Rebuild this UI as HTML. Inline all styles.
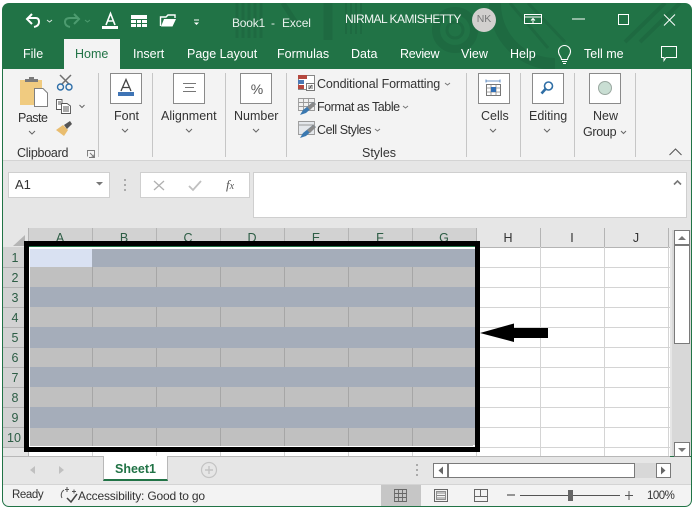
<!DOCTYPE html>
<html><head><meta charset="utf-8">
<style>
html,body{margin:0;padding:0;background:#fff}
#w{position:relative;width:695px;height:511px;overflow:hidden;background:#fff;font-family:"Liberation Sans",sans-serif;font-size:12.5px;color:#333}
#w div{position:absolute}
.t{white-space:nowrap;line-height:14px}
.g{color:#fff}
.box{background:#fff;border:1px solid #8a8a8a;box-sizing:border-box;width:32px;height:31px;top:73px}
.sep{width:1px;background:#c6c6c6;top:73px;height:84px}
.h{color:#555;font-size:12.5px;text-align:center;line-height:14px}
svg{position:absolute;overflow:visible}
</style></head><body>
<div id="w">
<!-- window frame -->
<div style="left:2px;top:3px;width:690px;height:504px;background:#217346;border-radius:7px"></div>
<svg style="left:2px;top:3px" width="690" height="66" viewBox="2 3 690 66">
<defs><clipPath id="c"><rect x="2" y="3" width="690" height="66"/></clipPath></defs>
<g stroke="#1e6a41" fill="none" clip-path="url(#c)">
<path d="M237 3V38M243 3V38M249 3V38M255 3V38M261 3V38" stroke-width="3"/>
<path d="M283 3L298 26" stroke-width="5"/>
<path d="M328 3V40" stroke-width="9"/>
<path d="M346 3V34M351 3V34M356 3V34M361 3V34" stroke-width="2"/>
<circle cx="455" cy="30" r="19" stroke-width="8"/>
<circle cx="455" cy="30" r="8" stroke-width="3"/>
<path d="M495 3A60 60 0 0 0 555 64" stroke-width="12"/>
<path d="M510 3L548 48M528 3L565 42" stroke-width="3"/>
<path d="M625 42L665 3M640 42L680 3" stroke-width="4"/>
</g></svg>
<!-- QAT -->
<svg style="left:0;top:0" width="240" height="40" viewBox="0 0 240 40">
<path d="M28 18H36Q39 18 39 22T34 27" fill="none" stroke="#fff" stroke-width="2"/>
<path d="M32 14L27 19L32 24" fill="none" stroke="#fff" stroke-width="2"/>
<path d="M47 20l2.500 2 2.500-2" fill="none" stroke="#d6e6dc"/>
<path d="M78 18H70Q65 18 65 22T70 27" fill="none" stroke="#4c9b6f" stroke-width="2"/>
<path d="M74 14L79 19L74 24" fill="none" stroke="#4c9b6f" stroke-width="2"/>
<path d="M85 20l2.500 2 2.500-2" fill="none" stroke="#4c9b6f"/>
<path d="M106 25L110.500 13.500L115 25M107.500 21H113.500" fill="none" stroke="#fff" stroke-width="1.600"/>
<rect x="102" y="26" width="16" height="3" fill="#fff"/>
<rect x="131" y="15" width="16" height="12" fill="#fff"/>
<path d="M131 19.500H147M131 23.500H147M136.500 19.500V27M141.500 19.500V27" stroke="#217346"/>
<path d="M160.500 26V17H166L168 15H175V18" fill="none" stroke="#fff" stroke-width="1.400"/>
<path d="M161 26.500L164 19H176L172.500 26.500Z" fill="#fff"/>
<path d="M194 20H199" stroke="#fff"/><path d="M194 22.500h5l-2.500 2.500z" fill="#fff"/>
</svg>
<div class="t" style="left:232px;top:16px;font-size:12px;color:#e8f1ec;letter-spacing:-.2px">Book1</div>
<div class="t" style="left:271px;top:16px;font-size:12px;color:#e8f1ec">-</div>
<div class="t" style="left:282px;top:16px;font-size:12px;color:#e8f1ec;letter-spacing:-.1px">Excel</div>
<div class="t" style="left:345px;top:12px;font-size:12px;letter-spacing:-.53px;color:#f2f7f4">NIRMAL KAMISHETTY</div>
<div style="left:472px;top:8px;width:24px;height:24px;border-radius:50%;background:#d2d0ce;color:#777;text-align:center;line-height:23px;font-size:10.500px">NK</div>
<svg style="left:520px;top:10px" width="170" height="22" viewBox="520 10 170 22">
<rect x="524.500" y="14.500" width="17" height="9" fill="none" stroke="#fff"/><path d="M524 17H542" stroke="#fff"/><path d="M533 23V18.500M531 20.500L533 18.500L535 20.500" fill="none" stroke="#fff"/>
<path d="M572 19H585" stroke="#fff"/>
<rect x="618.500" y="14.500" width="10" height="10" fill="none" stroke="#fff" stroke-width="1"/>
<path d="M664 14.500L675 25.500M675 14.500L664 25.500" stroke="#fff"/>
</svg>
<!-- Tabs -->
<div style="left:64px;top:39px;width:56px;height:30px;background:#f3f3f3"></div>
<div class="t g" style="left:23px;top:47px">File</div>
<div class="t" style="left:75px;top:47px;color:#217346">Home</div>
<div class="t g" style="left:133px;top:47px">Insert</div>
<div class="t g" style="left:187px;top:47px">Page Layout</div>
<div class="t g" style="left:277px;top:47px">Formulas</div>
<div class="t g" style="left:351px;top:47px">Data</div>
<div class="t g" style="left:400px;top:47px;letter-spacing:-.3px">Review</div>
<div class="t g" style="left:461px;top:47px">View</div>
<div class="t g" style="left:510px;top:47px">Help</div>
<div class="t g" style="left:584px;top:47px">Tell me</div>
<svg style="left:555px;top:43px" width="20" height="24" viewBox="555 43 20 24">
<path d="M561.500 59.500C561.500 56.500 558.500 55.500 558.500 51.500A6 6 0 0 1 570.500 51.500C570.500 55.500 567.500 56.500 567.500 59.500ZM562 61.500H567M563 63.500H566" fill="none" stroke="#fff" stroke-width="1.100"/>
</svg>
<svg style="left:660px;top:44px" width="22" height="20" viewBox="660 44 22 20">
<path d="M661.500 46.500H676.500V57.500H666L664 60.500V57.500H661.500Z" fill="none" stroke="#fff"/>
</svg>
<!-- Ribbon -->
<div style="left:3px;top:69px;width:688px;height:92px;background:#f3f3f3;border-bottom:1px solid #d4d4d4;box-sizing:border-box"></div>
<svg style="left:15px;top:73px" width="70" height="70" viewBox="15 73 70 70">
<path d="M20 80H42V88H34V105H20Z" fill="#f0cb80"/>
<path d="M25 82V79H29V77H34V79H38V82Z" fill="#7a7a7a"/>
<path d="M34.500 88.500H43L47.500 93V106.500H34.500Z" fill="#fff" stroke="#808080"/>
<path d="M60 75L69 84M71 75L62 84" stroke="#6f6f6f" stroke-width="1.500"/>
<circle cx="60.500" cy="87" r="3" fill="none" stroke="#2d6ea8" stroke-width="1.400"/><circle cx="69" cy="87" r="3" fill="none" stroke="#2d6ea8" stroke-width="1.400"/>
<path d="M56.500 99.500H62V109.500H56.500ZM58 102H61M58 104H61" fill="#fff" stroke="#555" stroke-width=".9"/>
<path d="M61.500 103.500H67L70.500 106V113.500H61.500ZM63 107H69M63 109H69M63 111H69" fill="#fff" stroke="#555" stroke-width=".9"/>
<path d="M79.500 105l2.500 2.500 2.500-2.500" fill="none" stroke="#666"/>
<path d="M56 130L63 125L68 130L64 136Z" fill="#e9bd6f"/>
<path d="M64 125L70 121L72 124L67 129Z" fill="#555"/>
</svg>
<div class="t" style="left:18px;top:111px;letter-spacing:-.5px">Paste</div>
<svg style="left:28px;top:130px" width="10" height="6"><path d="M1 1l3 3 3-3" fill="none" stroke="#666"/></svg>
<div class="t" style="left:17px;top:146px;letter-spacing:-.25px">Clipboard</div>
<svg style="left:86px;top:149px" width="10" height="10"><path d="M1.500 7.500V1.500H8.500V8.500H3M4 4L8 8M8 5.500V8H5.500" fill="none" stroke="#777" stroke-width=".9"/></svg>
<div class="sep" style="left:98px"></div>
<div class="box" style="left:110px"></div>
<svg style="left:110px;top:73px" width="32" height="31"><path d="M11 18L16 6.500L21 18M12.500 14.500H19.500" fill="none" stroke="#444" stroke-width="1.300"/><rect x="8" y="19" width="16" height="4" fill="#3f74b5"/></svg>
<div class="t" style="left:114px;top:109px">Font</div>
<svg style="left:121px;top:128px" width="10" height="6"><path d="M1 1l3 3 3-3" fill="none" stroke="#666"/></svg>
<div class="sep" style="left:152px"></div>
<div class="box" style="left:173px"></div>
<svg style="left:173px;top:73px" width="32" height="31"><path d="M10 10.500H23M12 14.500H21M10 18.500H23" stroke="#777"/></svg>
<div class="t" style="left:161px;top:109px">Alignment</div>
<svg style="left:185px;top:128px" width="10" height="6"><path d="M1 1l3 3 3-3" fill="none" stroke="#666"/></svg>
<div class="sep" style="left:225px"></div>
<div class="box" style="left:240px"></div>
<div class="t" style="left:241px;top:82px;width:32px;text-align:center;font-size:14px;color:#555">%</div>
<div class="t" style="left:234px;top:109px">Number</div>
<svg style="left:252px;top:128px" width="10" height="6"><path d="M1 1l3 3 3-3" fill="none" stroke="#666"/></svg>
<div class="sep" style="left:286px"></div>
<svg style="left:295px;top:72px" width="24" height="68" viewBox="295 72 24 68">
<rect x="298.500" y="75.500" width="16" height="14" fill="#fff" stroke="#888"/>
<rect x="298" y="75" width="9" height="4" fill="#b5483f"/><rect x="298" y="80" width="6" height="4" fill="#4a79b5"/><rect x="298" y="85" width="6" height="4" fill="#b5483f"/>
<rect x="306.500" y="83.500" width="8" height="7" fill="#fff" stroke="#777"/><path d="M308 86H313M308 88H313M312 85L309 89" stroke="#444" stroke-width=".7"/>
<path d="M298.500 98.500H314.500V110.500H298.500ZM298.500 102.500H314.500M298.500 106.500H314.500M303.500 98.500V110.500M308.500 98.500V110.500" fill="#f0f0f0" stroke="#999" stroke-width=".9"/>
<path d="M313 102L316 104L306 113L300 115L303 110Z" fill="#3a78b0"/><path d="M313 102L316 104L310 110L307 107Z" fill="#8a8a8a"/>
<path d="M298.500 121.500H314.500V134.500H298.500Z" fill="#e4e7eb" stroke="#999" stroke-width=".9"/>
<path d="M299 125H314" stroke="#999"/>
<path d="M313 125L316 127L306 136L300 138L303 133Z" fill="#3a78b0"/><path d="M313 125L316 127L310 133L307 130Z" fill="#8a8a8a"/>
</svg>
<div class="t" style="left:317px;top:77px;letter-spacing:-.12px">Conditional Formatting</div>
<div class="t" style="left:317px;top:100px;letter-spacing:-.45px">Format as Table</div>
<div class="t" style="left:317px;top:123px;letter-spacing:-.45px">Cell Styles</div>
<svg style="left:440px;top:76px" width="14" height="64" viewBox="440 76 14 64"><path d="M445 83l2.500 2 2.500-2" fill="none" stroke="#777"/></svg>
<svg style="left:402px;top:103px" width="14" height="10"><path d="M1 3l2.500 2 2.500-2" fill="none" stroke="#777"/></svg>
<svg style="left:375px;top:126px" width="14" height="10"><path d="M0 3l2.500 2 2.500-2" fill="none" stroke="#777"/></svg>
<div class="t" style="left:362px;top:146px">Styles</div>
<div class="sep" style="left:466px"></div>
<div class="box" style="left:478px"></div>
<svg style="left:478px;top:73px" width="32" height="31">
<path d="M8 8H22M8 6.500V9.500M22 6.500V9.500" stroke="#3f74b5" stroke-width=".8"/>
<rect x="8.500" y="11.500" width="14" height="11" fill="#fff" stroke="#777"/>
<path d="M8.500 15H22.500M8.500 19H22.500M13 11.500V22.500M18 11.500V22.500" stroke="#888" stroke-width=".8"/>
<rect x="13" y="14" width="5" height="5" fill="#2f6eb5"/>
</svg>
<div class="t" style="left:481px;top:109px">Cells</div>
<svg style="left:489px;top:128px" width="10" height="6"><path d="M1 1l3 3 3-3" fill="none" stroke="#666"/></svg>
<div class="sep" style="left:520px"></div>
<div class="box" style="left:532px"></div>
<svg style="left:532px;top:73px" width="32" height="31"><circle cx="16.500" cy="13" r="4" fill="#fff" stroke="#2f6ea5" stroke-width="1.600"/><path d="M13.500 16L9.500 20.500" stroke="#2f6ea5" stroke-width="2.600"/></svg>
<div class="t" style="left:529px;top:109px">Editing</div>
<svg style="left:543px;top:128px" width="10" height="6"><path d="M1 1l3 3 3-3" fill="none" stroke="#666"/></svg>
<div class="sep" style="left:574px"></div>
<div class="box" style="left:589px"></div>
<svg style="left:589px;top:73px" width="32" height="31"><circle cx="16" cy="15" r="6.500" fill="#c9ded3" stroke="#9aa8a0"/></svg>
<div class="t" style="left:593px;top:109px">New</div>
<div class="t" style="left:583px;top:125px;letter-spacing:-.3px">Group</div>
<svg style="left:620px;top:130px" width="10" height="6"><path d="M1 1l2.500 2.500 2.500-2.500" fill="none" stroke="#666"/></svg>
<div class="sep" style="left:635px"></div>
<svg style="left:668px;top:147px" width="16" height="10"><path d="M1.500 8L7.500 2L13.500 8" fill="none" stroke="#555"/></svg>
<!-- Formula bar -->
<div style="left:3px;top:161px;width:688px;height:67px;background:#e6e6e6"></div>
<div style="left:8px;top:172px;width:102px;height:26px;background:#fff;border:1px solid #cfcfcf;box-sizing:border-box"></div>
<div class="t" style="left:15px;top:178px;font-size:13px">A1</div>
<svg style="left:95px;top:181px" width="10" height="6"><path d="M1 1H8L4.500 4.500Z" fill="#777"/></svg>
<svg style="left:122px;top:178px" width="6" height="16"><path d="M3 1V3M3 6V8M3 11V13" stroke="#aaa" stroke-width="2"/></svg>
<div style="left:140px;top:172px;width:110px;height:26px;background:#fff;border:1px solid #cfcfcf;box-sizing:border-box"></div>
<svg style="left:150px;top:178px" width="100" height="16" viewBox="150 178 100 16"><path d="M154 181L164 190M164 181L154 190" stroke="#b0b0b0" stroke-width="1.300"/><path d="M189 186L193 190L201 181" stroke="#c0c0c0" stroke-width="1.800" fill="none"/></svg>
<div class="t" style="left:226px;top:178px;font-family:'Liberation Serif',serif;font-style:italic;font-size:13px;color:#555">f<span style="font-size:10px">x</span></div>
<div style="left:253px;top:172px;width:434px;height:46px;background:#fff;border:1px solid #cfcfcf;box-sizing:border-box"></div>
<svg style="left:672px;top:179px" width="12" height="8"><path d="M2 5.500L5.500 2L9 5.500" fill="none" stroke="#777" stroke-width="1.600"/></svg>
<!-- Grid area -->
<div style="left:3px;top:228px;width:688px;height:228px;background:#e6e6e6"></div>
<div style="left:28px;top:247px;width:642px;height:209px;background:#fff"></div>
<svg style="left:0;top:228px" width="695" height="228" viewBox="0 228 695 228">
<path d="M13 246L25 235V246Z" fill="#b5b5b5"/>
<rect x="28" y="228" width="449" height="19" fill="#d2d2d2"/>
<rect x="3" y="247" width="25" height="200" fill="#d2d2d2"/>
<path d="M28.500 228V247M92.500 228V247M156.500 228V247M220.500 228V247M284.500 228V247M348.500 228V247M412.500 228V247M476.500 228V247M540.500 228V247M604.500 228V247M668.500 228V247" stroke="#b4b4b4"/>
<path d="M3 267.500H28M3 287.500H28M3 307.500H28M3 327.500H28M3 347.500H28M3 367.500H28M3 387.500H28M3 407.500H28M3 427.500H28M3 447.500H28" stroke="#b4b4b4"/>
<path d="M28 247.500H670M28.500 247V456" stroke="#b4b4b4"/>
<path d="M476 267.500H670M476 287.500H670M476 307.500H670M476 327.500H670M476 347.500H670M476 367.500H670M476 387.500H670M476 407.500H670M476 427.500H670M476 447.500H670" stroke="#d4d4d4"/>
<path d="M540.500 247V456M604.500 247V456M668.500 247V456M284.500 452V456M92.500 452V456M156.500 452V456M220.500 452V456M348.500 452V456M412.500 452V456M476.500 452V456" stroke="#d4d4d4"/>
<path d="M3 456.500H670" stroke="#b8b8b8"/>
<!-- Selection -->
<rect x="29" y="246" width="446" height="201" fill="#fff"/>
<rect x="29" y="246" width="446" height="1" fill="#217346"/>
<g fill="#c0c0c0">
<rect x="30" y="267" width="445" height="179"/>
</g>
<g fill="#a5adba">
<rect x="30" y="249" width="445" height="18"/><rect x="30" y="287" width="445" height="20"/><rect x="30" y="327" width="445" height="21"/><rect x="30" y="367" width="445" height="20"/><rect x="30" y="407" width="445" height="21"/>
</g>
<rect x="30" y="249" width="62" height="18" fill="#d9e1f2"/>
<path d="M92.500 267V287M156.500 267V287M220.500 267V287M284.500 267V287M348.500 267V287M412.500 267V287M92.500 307V327M156.500 307V327M220.500 307V327M284.500 307V327M348.500 307V327M412.500 307V327M92.500 348V367M156.500 348V367M220.500 348V367M284.500 348V367M348.500 348V367M412.500 348V367M92.500 387V407M156.500 387V407M220.500 387V407M284.500 387V407M348.500 387V407M412.500 387V407M92.500 428V446M156.500 428V446M220.500 428V446M284.500 428V446M348.500 428V446M412.500 428V446" stroke="#a6a6a6"/>
<path d="M473 446H477V442H475V445H473Z" fill="#fff"/>
<!-- Black border -->
<path d="M26.500 243.500H477.500V449.500H26.500Z" fill="none" stroke="#000" stroke-width="5"/>
<!-- Arrow -->
<path d="M480 333L514 323.500V328H548V338H514V342Z" fill="#000"/>
<!-- Scrollbar -->
<rect x="672" y="230" width="19" height="226" fill="#d8d8d8"/>
<rect x="674.500" y="230.500" width="15" height="14" fill="#fff" stroke="#7a7a7a"/>
<path d="M678 240L682 236L686 240Z" fill="#777"/>
<rect x="674.500" y="245.500" width="15" height="98" fill="#fff" stroke="#7a7a7a"/>
<rect x="674.500" y="442.500" width="15" height="14" fill="#fff" stroke="#7a7a7a"/>
<path d="M678 448L682 452L686 448Z" fill="#777"/>
</svg>
<div class="h" style="left:28px;top:231px;width:64px;color:#2d5d45">A</div>
<div class="h" style="left:92px;top:231px;width:64px;color:#2d5d45">B</div>
<div class="h" style="left:156px;top:231px;width:64px;color:#2d5d45">C</div>
<div class="h" style="left:220px;top:231px;width:64px;color:#2d5d45">D</div>
<div class="h" style="left:284px;top:231px;width:64px;color:#2d5d45">E</div>
<div class="h" style="left:348px;top:231px;width:64px;color:#2d5d45">F</div>
<div class="h" style="left:412px;top:231px;width:64px;color:#2d5d45">G</div>
<div class="h" style="left:476px;top:231px;width:64px;color:#333">H</div>
<div class="h" style="left:540px;top:231px;width:64px;color:#333">I</div>
<div class="h" style="left:604px;top:231px;width:64px;color:#333">J</div>
<div style="left:24px;top:241px;width:456px;height:5px;background:#000"></div>
<div class="h" style="left:3px;top:251px;width:24px;color:#2d5d45">1</div>
<div class="h" style="left:3px;top:271px;width:24px;color:#2d5d45">2</div>
<div class="h" style="left:3px;top:291px;width:24px;color:#2d5d45">3</div>
<div class="h" style="left:3px;top:311px;width:24px;color:#2d5d45">4</div>
<div class="h" style="left:3px;top:331px;width:24px;color:#2d5d45">5</div>
<div class="h" style="left:3px;top:351px;width:24px;color:#2d5d45">6</div>
<div class="h" style="left:3px;top:371px;width:24px;color:#2d5d45">7</div>
<div class="h" style="left:3px;top:391px;width:24px;color:#2d5d45">8</div>
<div class="h" style="left:3px;top:411px;width:24px;color:#2d5d45">9</div>
<div class="h" style="left:2px;top:431px;width:24px;color:#2d5d45">10</div>
<!-- Sheet bar -->
<div style="left:3px;top:457px;width:688px;height:27px;background:#e6e6e6"></div>
<svg style="left:0;top:457px" width="695" height="27" viewBox="0 457 695 27">
<path d="M35 466L30 470L35 474Z" fill="#c0c0c0"/><path d="M59 466L64 470L59 474Z" fill="#c0c0c0"/>
<circle cx="209" cy="470" r="7.500" fill="none" stroke="#c4c4c4" stroke-width="1.200"/><path d="M209 466V474M205 470H213" stroke="#c4c4c4" stroke-width="1.400"/>
<path d="M417 464V466M417 469V471M417 474V476" stroke="#aaa" stroke-width="2"/>
<rect x="433.500" y="463.500" width="14" height="14" fill="#fff" stroke="#7a7a7a"/>
<path d="M443 466.500L438.500 470.500L443 474.500Z" fill="#666"/>
<rect x="448.500" y="463.500" width="186" height="14" fill="#fff" stroke="#7a7a7a"/>
<rect x="635" y="463" width="21" height="15" fill="#d8d8d8"/>
<rect x="656.500" y="463.500" width="14" height="14" fill="#fff" stroke="#7a7a7a"/>
<path d="M661 466.500L665.500 470.500L661 474.500Z" fill="#666"/>
</svg>
<div style="left:103px;top:456px;background:#fff;border:1px solid #b8b8b8;border-top:none;border-bottom:2px solid #217346;height:23px;width:63px"></div>
<div class="t" style="left:103px;top:462px;width:65px;text-align:center;font-weight:bold;color:#217346;font-size:12.500px">Sheet1</div>
<!-- Status -->
<div style="left:3px;top:484px;width:688px;height:22px;background:#f3f3f3;border-radius:0 0 6px 6px"></div>
<div style="left:3px;top:484px;width:688px;height:1px;background:#d4d4d4"></div>
<div class="t" style="left:12px;top:488px;font-size:11.500px;letter-spacing:-.4px">Ready</div>
<svg style="left:58px;top:486px" width="22" height="20" viewBox="58 486 22 20">
<path d="M64 490A6 6 0 0 0 62 498" fill="none" stroke="#555"/><path d="M67 487V492M65 489.500H69" stroke="#555"/>
<path d="M72 491.500H76M74 489.500V493.500" stroke="#555"/>
<path d="M67 498L71 502L77 494" fill="none" stroke="#444" stroke-width="1.500"/>
</svg>
<div class="t" style="left:78px;top:489px;font-size:12px;letter-spacing:-.18px">Accessibility: Good to go</div>
<div style="left:381px;top:485px;width:40px;height:21px;background:#c6c6c6"></div>
<svg style="left:390px;top:486px" width="300" height="20" viewBox="390 486 300 20">
<path d="M394.500 489.500H406.500V501.500H394.500ZM394.500 493.500H406.500M394.500 497.500H406.500M398.500 489.500V501.500M402.500 489.500V501.500" fill="none" stroke="#666" stroke-width=".9"/>
<rect x="434.500" y="489.500" width="13" height="12" fill="none" stroke="#666"/>
<path d="M437 493H445M437 495.500H445M437 498H445" stroke="#666" stroke-width=".8"/><rect x="436.500" y="491.500" width="9" height="8" fill="none" stroke="#666" stroke-width=".7"/>
<path d="M474.500 489.500H487.500V501.500H474.500ZM480.500 489.500V496.500H474.500M480.500 496.500H487.500" fill="none" stroke="#666"/>
<path d="M507 495H515" stroke="#555" stroke-width="1.200"/>
<path d="M520 495.500H620" stroke="#555"/>
<rect x="568" y="490" width="5" height="11" fill="#666"/>
<path d="M625 495.500H633M629 491V500" stroke="#555"/>
</svg>
<div class="t" style="left:647px;top:489px;font-size:11.500px;letter-spacing:-.5px">100%</div>
</div>
</body></html>
